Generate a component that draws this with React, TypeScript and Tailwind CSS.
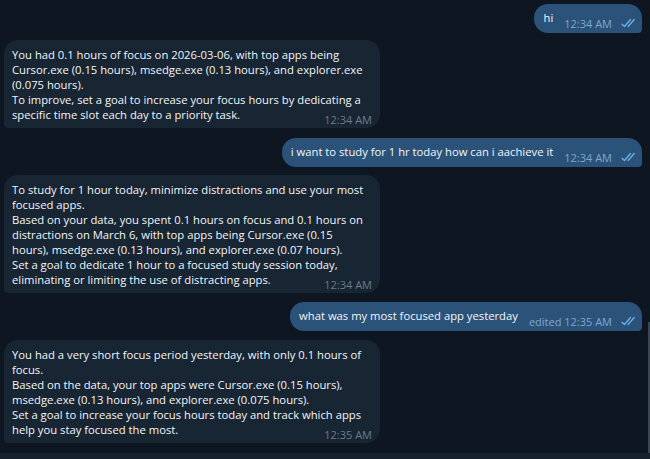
import React from "react";

const Checks = () => (
  <svg width="16" height="10" viewBox="0 0 16 10" fill="none" className="shrink-0">
    <path d="M1 6.2 L3.5 8.5 L9.4 1.5" stroke="#6fb2ee" strokeWidth="1.25" strokeLinecap="round" strokeLinejoin="round" />
    <path d="M7.1 8.5 L13.2 1.5" stroke="#6fb2ee" strokeWidth="1.25" strokeLinecap="round" strokeLinejoin="round" />
  </svg>
);

const textFont = { fontFamily: "'Open Sans', 'Noto Sans', sans-serif" };

const Out = ({ text, time, mt }: { text: string; time: string; mt: string }) => (
  <div className={`flex justify-end pr-[8px] ${mt}`}>
    <div className="relative flex items-end h-[29px] pl-[9px] pr-[5px] pt-[6px] pb-[8px] rounded-[14px] rounded-br-[4px] bg-[#2b5278]">
      <span className="text-[11.25px] leading-[15px] text-[#f3f6f9] whitespace-nowrap" style={textFont}>
        {text}
      </span>
      <span className="ml-[11px] text-[11px] leading-none text-[#7da8d3] whitespace-nowrap mb-[-4px]" style={textFont}>
        {time}
      </span>
      <span className="ml-[9px] mb-[-3px]">
        <Checks />
      </span>
    </div>
  </div>
);

const In = ({ lines, time, mt }: { lines: string[]; time: string; mt: string }) => (
  <div className={`pl-[4px] ${mt}`}>
    <div className="relative w-[376px] pl-[8px] pr-[9px] pt-[7px] pb-[6px] rounded-[14px] rounded-bl-[4px] bg-[#182533]">
      <div className="text-[11.25px] leading-[15px] text-[#f3f6f9]" style={textFont}>
        {lines.map((l, i) => (
          <div key={i} className="whitespace-nowrap">{l}</div>
        ))}
      </div>
      <span className="absolute right-[8px] bottom-[3px] text-[11px] leading-none text-[#6c7b8a] whitespace-nowrap" style={textFont}>
        {time}
      </span>
    </div>
  </div>
);

export default function App() {
  return (
    <div className="relative w-[650px] h-[459px] bg-[#0e1621] overflow-hidden flex flex-col">
      <div className="flex flex-col pt-[4px]">
        <Out text="hi" time="12:34 AM" mt="" />
        <In
          mt="mt-[7px]"
          time="12:34 AM"
          lines={[
            "You had 0.1 hours of focus on 2026-03-06, with top apps being",
            "Cursor.exe (0.15 hours), msedge.exe (0.13 hours), and explorer.exe",
            "(0.075 hours).",
            "To improve, set a goal to increase your focus hours by dedicating a",
            "specific time slot each day to a priority task.",
          ]}
        />
        <Out text="i want to study for 1 hr today how can i aachieve it" time="12:34 AM" mt="mt-[10px]" />
        <In
          mt="mt-[8px]"
          time="12:34 AM"
          lines={[
            "To study for 1 hour today, minimize distractions and use your most",
            "focused apps.",
            "Based on your data, you spent 0.1 hours on focus and 0.1 hours on",
            "distractions on March 6, with top apps being Cursor.exe (0.15",
            "hours), msedge.exe (0.13 hours), and explorer.exe (0.07 hours).",
            "Set a goal to dedicate 1 hour to a focused study session today,",
            "eliminating or limiting the use of distracting apps.",
          ]}
        />
        <Out text="what was my most focused app yesterday" time="edited 12:35 AM" mt="mt-[9px]" />
        <In
          mt="mt-[9px]"
          time="12:35 AM"
          lines={[
            "You had a very short focus period yesterday, with only 0.1 hours of",
            "focus.",
            "Based on the data, your top apps were Cursor.exe (0.15 hours),",
            "msedge.exe (0.13 hours), and explorer.exe (0.075 hours).",
            "Set a goal to increase your focus hours today and track which apps",
            "help you stay focused the most.",
          ]}
        />
      </div>
      <div className="mt-auto h-[6px] bg-[#17212b]" />
      <div className="absolute right-0 top-[322px] w-[2px] h-[131px] bg-[#3b4653]" />
    </div>
  );
}
